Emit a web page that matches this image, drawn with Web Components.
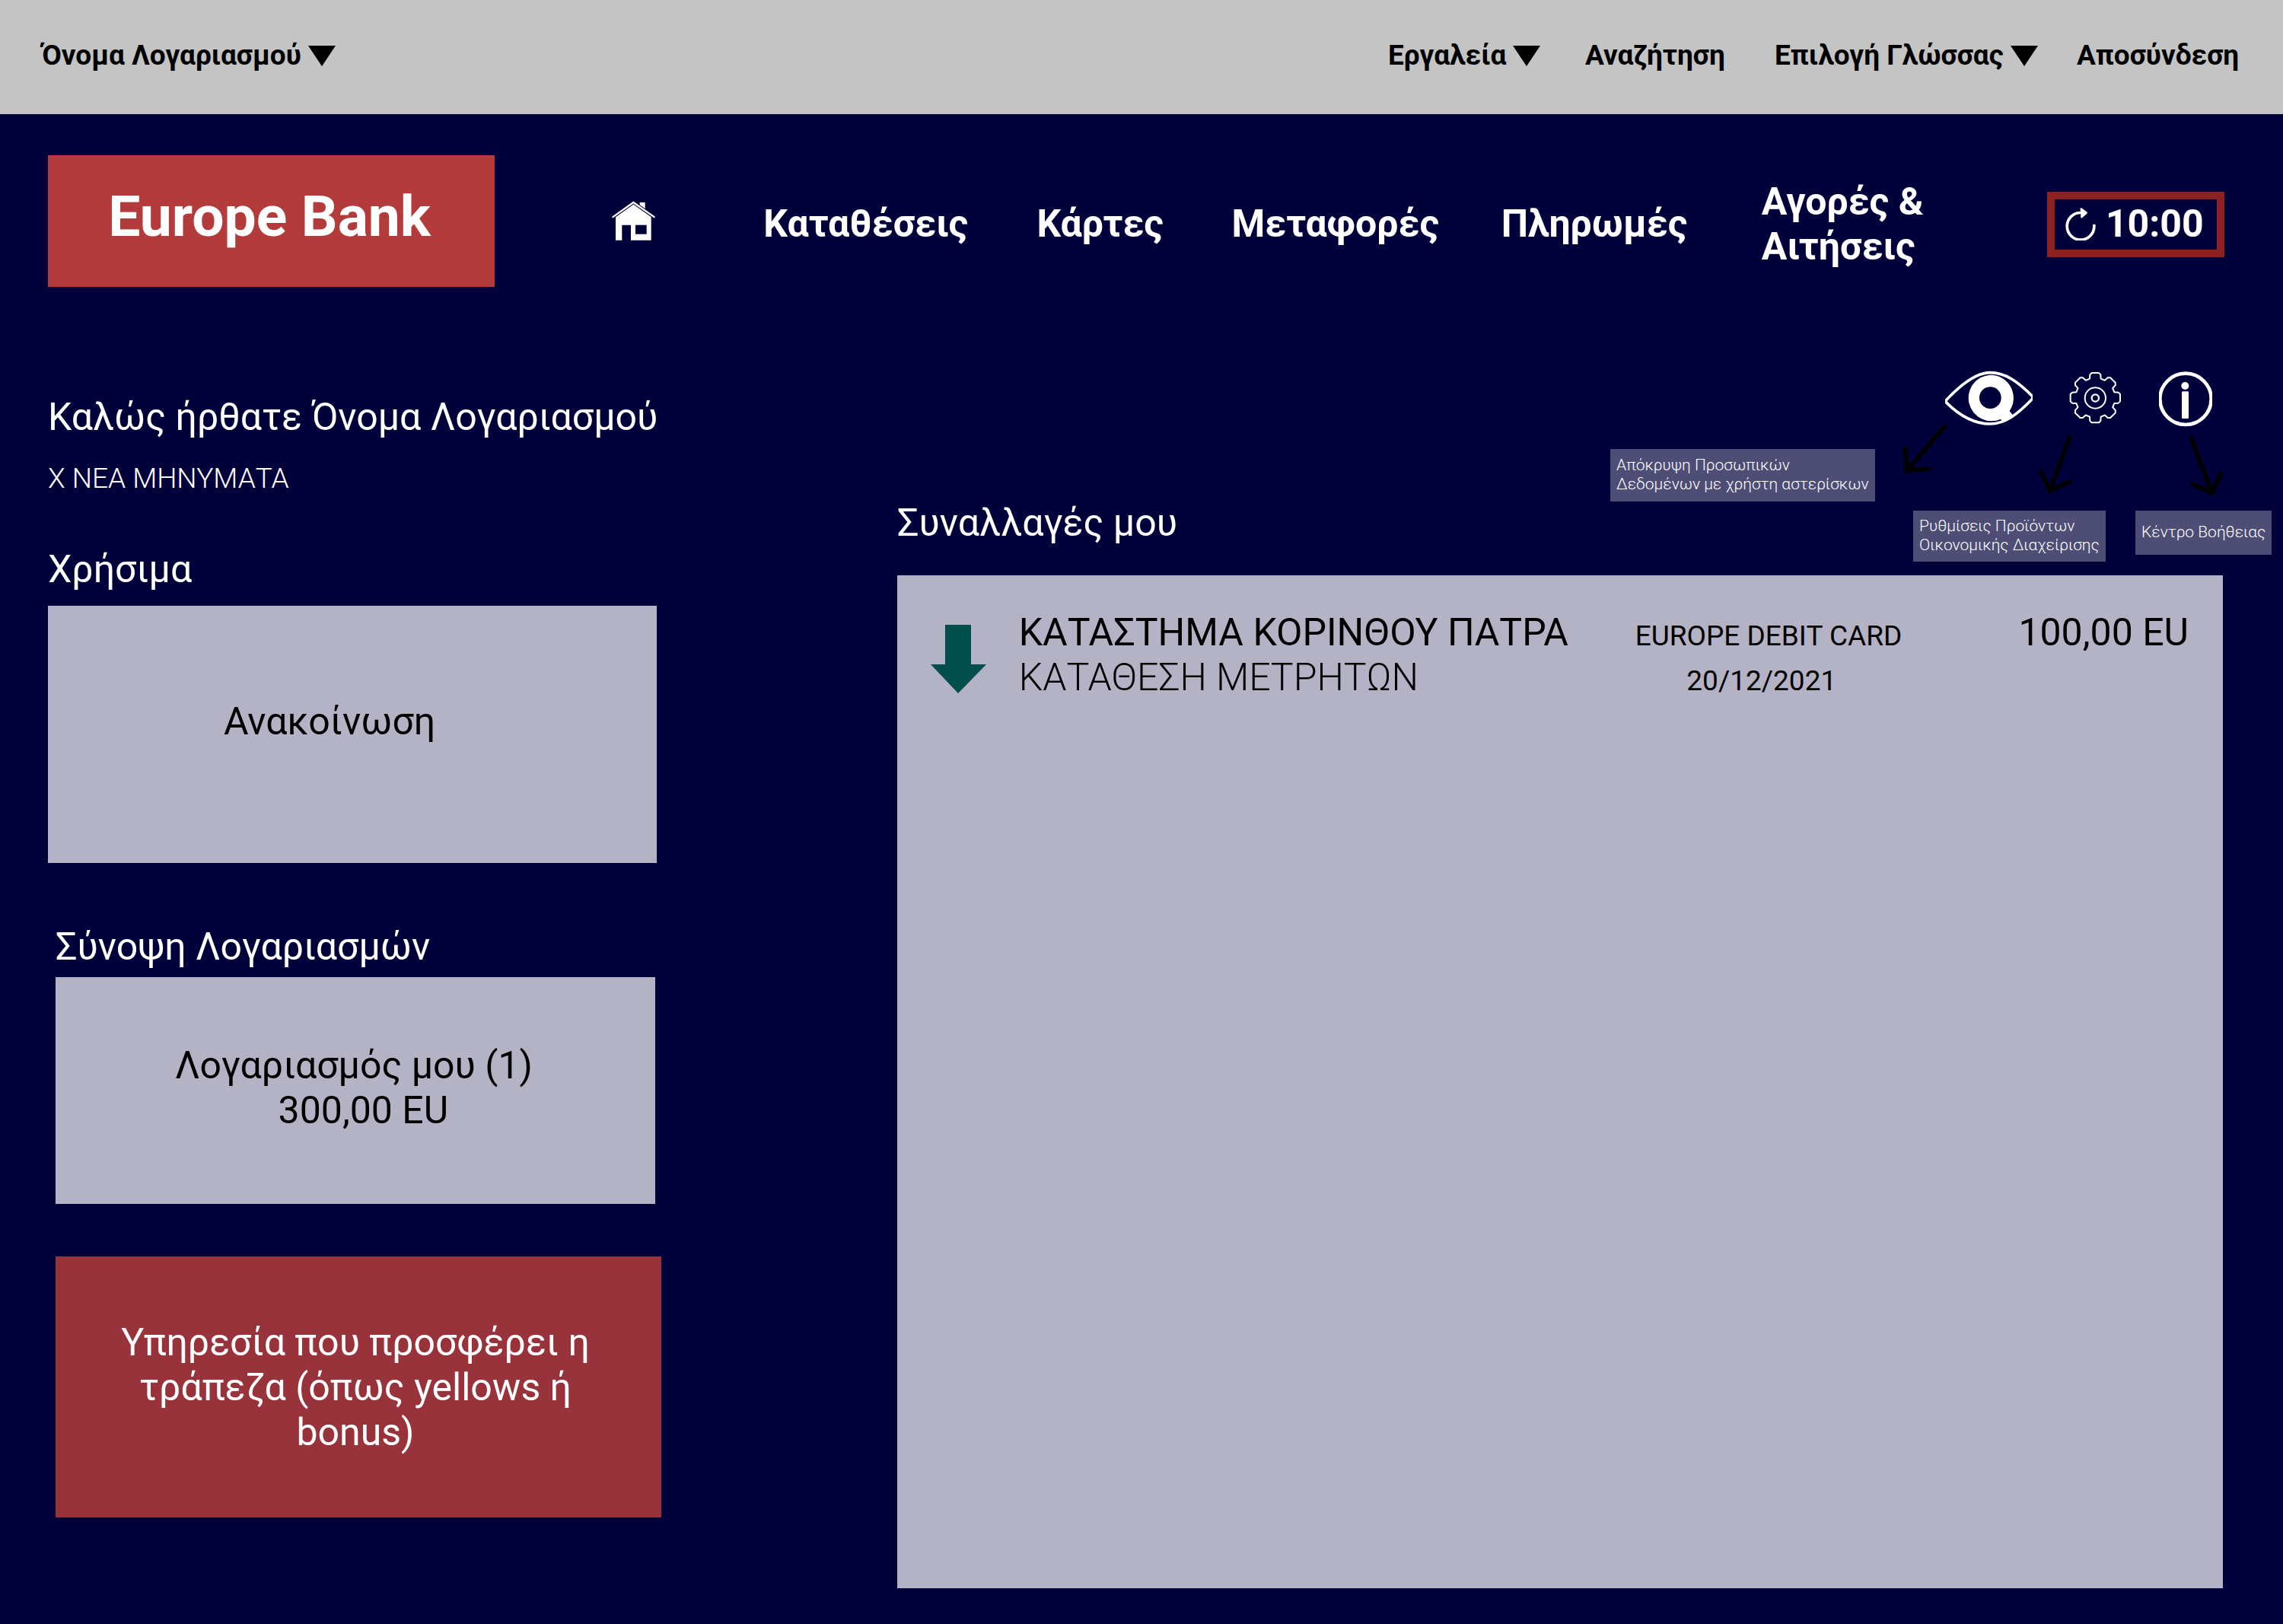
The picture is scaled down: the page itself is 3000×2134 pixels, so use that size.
<!DOCTYPE html>
<html lang="el">
<head>
<meta charset="utf-8">
<title>Europe Bank</title>
<style>
  :root {
    --navy: #00003b;
    --bar: #c4c4c4;
    --panel: #b4b2c5;
    --brand: #b33b3b;
    --offer: #99333b;
    --timer: #8b2121;
  }
  body {
    margin: 0;
    min-height: 100vh;
    background: var(--navy);
    color: #fff;
    font: 400 50px/59px Roboto, "Liberation Sans", sans-serif;
  }
</style>
</head>
<body>
<bank-app></bank-app>

<script>
const RESET = `
  *, *::before, *::after { box-sizing: border-box; }
  a { color: inherit; text-decoration: none; }
  button { margin: 0; padding: 0; border: 0; background: none; color: inherit; font: inherit; text-align: inherit; cursor: pointer; }
  h1, h2, p { margin: 0; font: inherit; }
  svg { display: block; flex: none; }
`;

function define(name, css, html) {
  const template = document.createElement('template');
  template.innerHTML = `<style>${RESET}${css}</style>${html}`;
  customElements.define(name, class extends HTMLElement {
    constructor() {
      super();
      this.attachShadow({ mode: 'open' }).append(template.content.cloneNode(true));
    }
  });
}

/* Button of the grey utility bar that opens a menu */
define('menu-button', `
  :host { display: block; }
  button { display: flex; align-items: center; gap: 9px; white-space: nowrap; }
`, `
  <button type="button" aria-haspopup="true">
    <slot></slot>
    <svg width="36" height="27" viewBox="0 0 36 27" aria-hidden="true"><path d="M0 0H36L18 27Z"/></svg>
  </button>
`);

define('utility-bar', `
  :host { display: block; background: var(--bar); color: #000; font-size: 37px; line-height: 42px; font-weight: 700; }
  div {
    display: grid; align-items: center; min-height: 150px; padding: 0 0 4px 55px;
    grid-template-columns: 1769fr 259fr 249fr 397fr 271fr;
  }
  a { white-space: nowrap; }
`, `
  <div>
    <menu-button>Όνομα Λογαριασμού</menu-button>
    <menu-button>Εργαλεία</menu-button>
    <a href="#search">Αναζήτηση</a>
    <menu-button>Επιλογή Γλώσσας</menu-button>
    <a href="#logout">Αποσύνδεση</a>
  </div>
`);

define('bank-logo', `
  :host { display: block; }
  a {
    display: flex; align-items: center; justify-content: center; min-height: 173px; padding: 0 5px 13px 0;
    background: var(--brand); font-size: 75px; line-height: 88px; font-weight: 700; white-space: nowrap;
  }
`, `<a href="#"><slot></slot></a>`);

define('session-timer', `
  :host { display: block; }
  button {
    display: flex; align-items: center; gap: 13px; width: 100%; min-height: 86px; padding: 0 14px;
    border: 10px solid var(--timer); font-weight: 700;
  }
`, `
  <button type="button" aria-label="10:00">
    <svg width="40" height="43" viewBox="101 96 119 129" fill="none" stroke="#fff" stroke-linecap="round" stroke-linejoin="round">
      <path d="M214 166A53.5 53.5 0 1 1 163 115.500" stroke-width="11"/>
      <path d="M163 101L183 116L165 132L166 116Z" stroke-width="8" fill="#fff"/>
    </svg>
    <slot></slot>
  </button>
`);

define('main-nav', `
  :host { display: block; }
  header {
    display: grid; align-items: center; padding: 54px 77px 0 63px;
    grid-template-columns: 587fr 154fr 199fr 359fr 256fr 354fr 342fr 375fr 233fr;
    font-weight: 700;
  }
  nav { display: contents; }
  nav a { white-space: nowrap; }
  nav a, session-timer { padding-top: 8px; }
  nav .home { grid-column: 3; padding: 0 0 2px; justify-self: start; }
`, `
  <header>
    <bank-logo>Europe Bank</bank-logo>
    <nav aria-label="Κύρια πλοήγηση">
      <a class="home" href="#home" aria-label="Αρχική">
        <svg width="57" height="52" viewBox="42 40 171 156" fill="#fff" aria-hidden="true">
          <path d="M152 46H173V76L152 61Z"/>
          <path d="M57 195V102L127 51L197 102V195H117V135H82V195Z"/>
          <rect x="135" y="135" width="44" height="36" fill="#00003b"/>
          <path d="M44 105L127 46L211 105" fill="none" stroke="#00003b" stroke-width="13"/>
          <path d="M44 105L127 46L211 105" fill="none" stroke="#fff" stroke-width="7"/>
        </svg>
      </a>
      <a href="#deposits">Καταθέσεις</a>
      <a href="#cards">Κάρτες</a>
      <a href="#transfers">Μεταφορές</a>
      <a href="#payments">Πληρωμές</a>
      <a href="#applications">Αγορές &amp;<br>Αιτήσεις</a>
    </nav>
    <session-timer>10:00</session-timer>
  </header>
`);

/* Coloured box whose content is centred */
define('info-panel', `
  :host { display: flex; flex-direction: column; align-items: center; justify-content: center; text-align: center; background: var(--panel); color: #000; }
  :host([tone="offer"]) { background: var(--offer); color: #fff; }
`, `<slot></slot>`);

define('account-overview', `
  :host { display: block; padding-top: 142px; }
  .messages { display: block; width: max-content; margin-top: 30px; font-size: 37px; line-height: 42px; font-weight: 300; }
  .useful { margin: 69px 6px 0 0; }
  .useful info-panel { margin-top: 18px; min-height: 338px; padding: 0 60px 34px 0; }
  .accounts { margin: 81px 0 0 10px; }
  .accounts info-panel { margin: 10px 8px 0 0; min-height: 298px; padding: 0 4px 6px 0; }
  .accounts span { white-space: pre; }
  .accounts .offer { margin: 69px 0 0; min-height: 343px; padding: 2px 64px 0 56px; }
`, `
  <h1>Καλώς ήρθατε Όνομα Λογαριασμού</h1>
  <a class="messages" href="#messages">Χ ΝΕΑ ΜΗΝΥΜΑΤΑ</a>
  <section class="useful">
    <h2>Χρήσιμα</h2>
    <info-panel><p>Ανακοίνωση</p></info-panel>
  </section>
  <section class="accounts">
    <h2>Σύνοψη Λογαριασμών</h2>
    <info-panel><p>Λογαριασμός μου (1)<br><span>&nbsp;&nbsp;300,00 EU</span></p></info-panel>
    <info-panel class="offer" tone="offer"><p>Υπηρεσία που προσφέρει η τράπεζα (όπως yellows ή bonus)</p></info-panel>
  </section>
`);

/* Icon button with an arrow and a callout hanging over the page */
define('icon-hint', `
  :host { display: block; position: relative; }
  .arrow, .tip { position: absolute; }
  .arrow { left: var(--arrow-x); top: var(--arrow-y); }
  .tip {
    left: var(--tip-x); top: var(--tip-y); display: flex; align-items: center; justify-content: center;
    width: max-content; min-height: var(--tip-h); padding: 0 8px 2px; background: #4d4d76;
    font-size: 21px; line-height: 25px; font-weight: 300;
  }
  button { display: block; }
`, `
  <button type="button"><slot name="icon"></slot></button>
  <div class="arrow"><slot name="arrow"></slot></div>
  <div class="tip" role="tooltip"><div><slot></slot></div></div>
`);

const gearPath = (() => {
  const tooth = [[-22, 75], [-21, 91], [-14, 98], [14, 98], [21, 91], [22, 75]];
  const points = [];
  for (let k = 0; k < 8; k++) {
    const a = k * Math.PI / 4;
    for (const [x, y] of tooth) {
      points.push([817 + x * Math.cos(a) + y * Math.sin(a), 248 + x * Math.sin(a) - y * Math.cos(a)].map(n => n.toFixed(1)).join(' '));
    }
  }
  return 'M' + points.join('L') + 'Z';
})();

define('quick-tools', `
  :host { display: flex; justify-content: flex-end; align-items: flex-start; gap: 48px; min-height: 74px; padding-right: 14px; }
  .eye  { --arrow-x: -56px; --arrow-y: 68px; --tip-x: -440px; --tip-y: 103px; --tip-h: 69px; }
  .gear { --arrow-x: -41px; --arrow-y: 80px; --tip-x: -205px; --tip-y: 184px; --tip-h: 67px; }
  .info { --arrow-x: 38px; --arrow-y: 83px; --tip-x: -31px; --tip-y: 184px; --tip-h: 58px; }
  .line { fill: none; stroke: #fff; }
  .pen { fill: none; stroke: #000; stroke-width: 18; stroke-linecap: round; stroke-linejoin: round; }
  .shaft { stroke-linecap: butt; }
`, `
  <icon-hint class="eye">
    <svg slot="icon" width="115" height="72" viewBox="228 141 345 216" aria-hidden="true">
      <path class="line" stroke-width="11" d="M228 262C290 195 350 149 406 149C465 149 515 184 573 243V251C515 312 465 351 405 351C345 351 290 325 228 262Z"/>
      <path fill="#fff" fill-rule="evenodd" d="M405 158A91 91 0 0 1 482 300L499 322L452 345L448 332A91 91 0 1 1 405 158ZM406 205A43 43 0 1 0 406 291A43 43 0 1 0 406 205Z"/>
    </svg>
    <svg slot="arrow" width="61" height="67" viewBox="58 346 184 202" aria-hidden="true">
      <path class="pen shaft" d="M230 357L78 535"/><path class="pen" d="M69 450L76 537L161 530"/>
    </svg>
    Απόκρυψη Προσωπικών<br>Δεδομένων με χρήστη αστερίσκων
  </icon-hint>
  <icon-hint class="gear">
    <svg slot="icon" width="70" height="74" viewBox="714 141 210 222" aria-hidden="true">
      <path class="line" stroke-width="6" stroke-linejoin="round" d="${gearPath}"/>
      <circle class="line" stroke-width="6" cx="817" cy="249" r="41"/>
      <circle class="line" stroke-width="7" cx="817" cy="249" r="14"/>
    </svg>
    <svg slot="arrow" width="45" height="82" viewBox="592 382 136 246" aria-hidden="true">
      <path class="pen shaft" d="M721 394L640 617"/><path class="pen" d="M604 540L640 617L716 581"/>
    </svg>
    Ρυθμίσεις Προϊόντων<br>Οικονομικής Διαχείρισης
  </icon-hint>
  <icon-hint class="info">
    <svg slot="icon" width="70" height="74" viewBox="1071 141 210 222" aria-hidden="true">
      <circle class="line" stroke-width="14" cx="1176" cy="253" r="101"/>
      <circle fill="#fff" cx="1174" cy="201" r="15"/>
      <rect fill="#fff" x="1161" y="223" width="27" height="107" rx="4"/>
    </svg>
    <svg slot="arrow" width="47" height="82" viewBox="1185 390 140 246" aria-hidden="true">
      <path class="pen shaft" d="M1196 402L1280 625"/><path class="pen" d="M1203 589L1280 624L1314 547"/>
    </svg>
    Κέντρο Βοήθειας
  </icon-hint>
`);

define('transaction-list', `
  :host { display: block; padding-top: 110px; }
  quick-tools { margin-bottom: 97px; }
  .card { margin-top: 39px; min-height: 1331px; padding: 46px 45px 0 44px; background: var(--panel); color: #000; }
  table { width: 100%; border-collapse: collapse; table-layout: fixed; }
  td { padding: 0; vertical-align: top; white-space: nowrap; }
  td svg { margin-top: 19px; }
  .icon { width: 7%; }
  .text { width: 49%; }
  .account { width: 22%; }
  .light { font-weight: 300; }
  .account p { width: max-content; text-align: center; }
  .account span { font-size: 37px; line-height: 1; white-space: pre; }
  .amount { text-align: right; }
`, `
  <quick-tools></quick-tools>
  <h2 id="title">Συναλλαγές μου</h2>
  <div class="card">
    <table aria-labelledby="title">
      <tr>
        <td class="icon">
          <svg width="73" height="90" viewBox="0 0 73 90" aria-hidden="true"><path fill="#004f4d" d="M19 0H53V52H73L36 90L0 52H19Z"/></svg>
        </td>
        <td class="text"><p>ΚΑΤΑΣΤΗΜΑ ΚΟΡΙΝΘΟΥ ΠΑΤΡΑ</p><p class="light">ΚΑΤΑΘΕΣΗ ΜΕΤΡΗΤΩΝ</p></td>
        <td class="account"><p><span>EUROPE DEBIT CARD</span><br><span>20/12/2021&nbsp;&nbsp;</span></p></td>
        <td class="amount">100,00 EU</td>
      </tr>
    </table>
  </div>
`);

define('bank-app', `
  :host { display: block; }
  main { display: grid; grid-template-columns: 806fr 1742fr; gap: 310px; padding: 0 79px 47px 63px; }
`, `
  <utility-bar></utility-bar>
  <main-nav></main-nav>
  <main>
    <account-overview></account-overview>
    <transaction-list></transaction-list>
  </main>
`);
</script>
</body>
</html>
